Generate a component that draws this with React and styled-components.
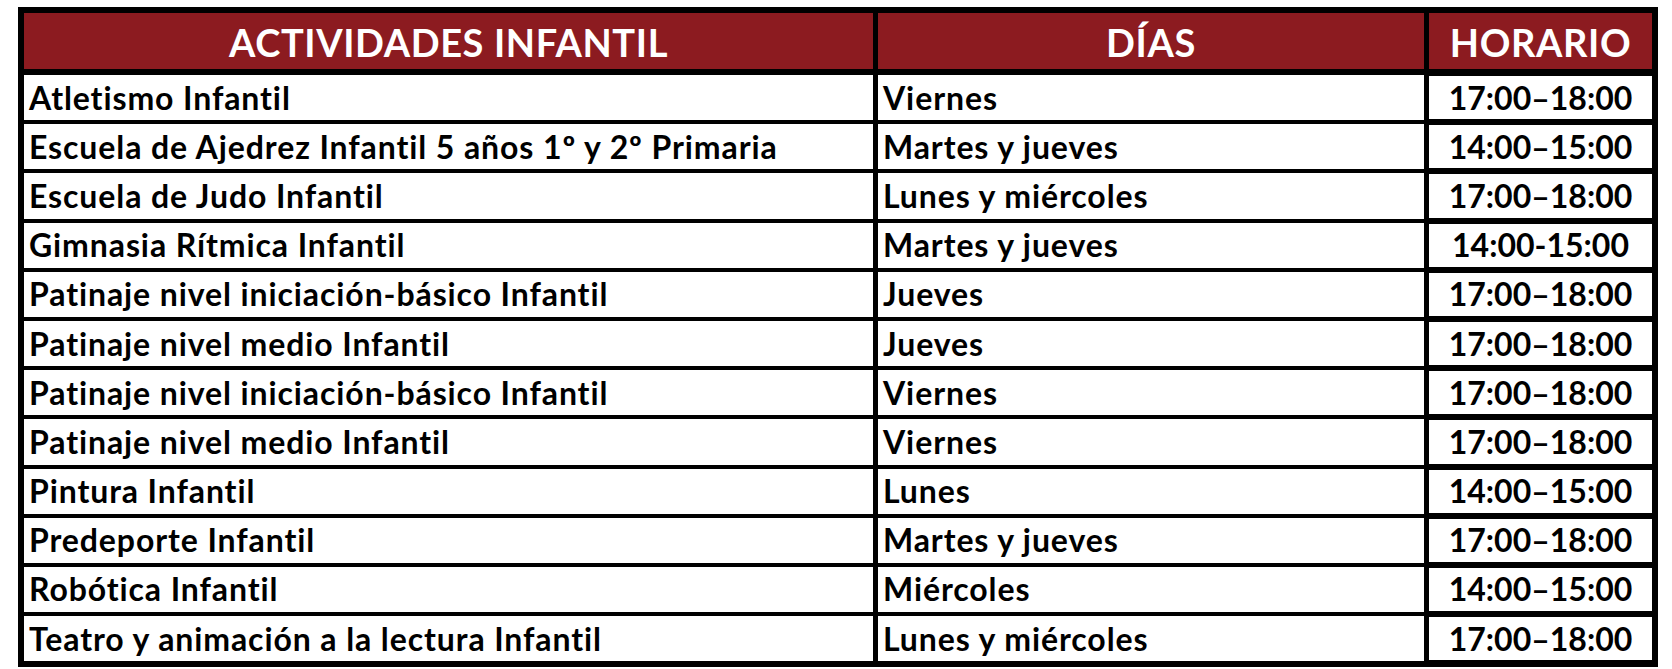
import React from 'react'
import styled, { createGlobalStyle } from 'styled-components'

const GlobalStyle = createGlobalStyle`
    body {
        margin: 0;
        background: #ffffff;
        font-family: Lato, 'Open Sans', sans-serif;
    }
`

const activities = [
    { name: 'Atletismo Infantil', days: 'Viernes', time: '17:00–18:00' },
    { name: 'Escuela de Ajedrez Infantil 5 años 1º y 2º Primaria', days: 'Martes y jueves', time: '14:00–15:00' },
    { name: 'Escuela de Judo Infantil', days: 'Lunes y miércoles', time: '17:00–18:00' },
    { name: 'Gimnasia Rítmica Infantil', days: 'Martes y jueves', time: '14:00-15:00' },
    { name: 'Patinaje nivel iniciación-básico Infantil', days: 'Jueves', time: '17:00–18:00' },
    { name: 'Patinaje nivel medio Infantil', days: 'Jueves', time: '17:00–18:00' },
    { name: 'Patinaje nivel iniciación-básico Infantil', days: 'Viernes', time: '17:00–18:00' },
    { name: 'Patinaje nivel medio Infantil', days: 'Viernes', time: '17:00–18:00' },
    { name: 'Pintura Infantil', days: 'Lunes', time: '14:00–15:00' },
    { name: 'Predeporte Infantil', days: 'Martes y jueves', time: '17:00–18:00' },
    { name: 'Robótica Infantil', days: 'Miércoles', time: '14:00–15:00' },
    { name: 'Teatro y animación a la lectura Infantil', days: 'Lunes y miércoles', time: '17:00–18:00' }
]

const Page = styled.div`
    padding: 7px 0 0 18px;
`

const Table = styled.div`
    display: grid;
    grid-template-columns: 849px 546px 223px;
    grid-template-rows: 58px repeat(12, 45.2px);
    column-gap: 5px;
    row-gap: 4px;
    width: 1628px;
    padding: 6px;
    background: #000000;
`

const HeaderCell = styled.div`
    display: flex;
    align-items: center;
    justify-content: center;
    background: #8c1b20;
    border-bottom: 2px solid #000000;
    color: #ffffff;
    font-size: 38px;
    font-weight: 700;
    letter-spacing: 0.6px;
    line-height: 1;
    padding-top: 2px;
`

const Cell = styled.div`
    display: flex;
    align-items: center;
    justify-content: ${props => (props.center ? 'center' : 'flex-start')};
    padding: 0 ${props => (props.center ? '0' : '5px')};
    background: #ffffff;
    color: #000000;
    font-size: 32px;
    font-weight: 700;
    letter-spacing: ${props => (props.center ? '0' : '0.9px')};
    line-height: 1;
    white-space: nowrap;
    ${props => props.thick && 'box-shadow: inset 0 1px 0 #000000, inset 0 -1px 0 #000000;'};
`

const App = () => (
    <Page>
        <GlobalStyle />
        <Table>
            <HeaderCell>ACTIVIDADES INFANTIL</HeaderCell>
            <HeaderCell>DÍAS</HeaderCell>
            <HeaderCell>HORARIO</HeaderCell>
            {activities.map((activity, index) => (
                <React.Fragment key={index}>
                    <Cell>{activity.name}</Cell>
                    <Cell>{activity.days}</Cell>
                    <Cell center thick>
                        {activity.time}
                    </Cell>
                </React.Fragment>
            ))}
        </Table>
    </Page>
)

export default App
